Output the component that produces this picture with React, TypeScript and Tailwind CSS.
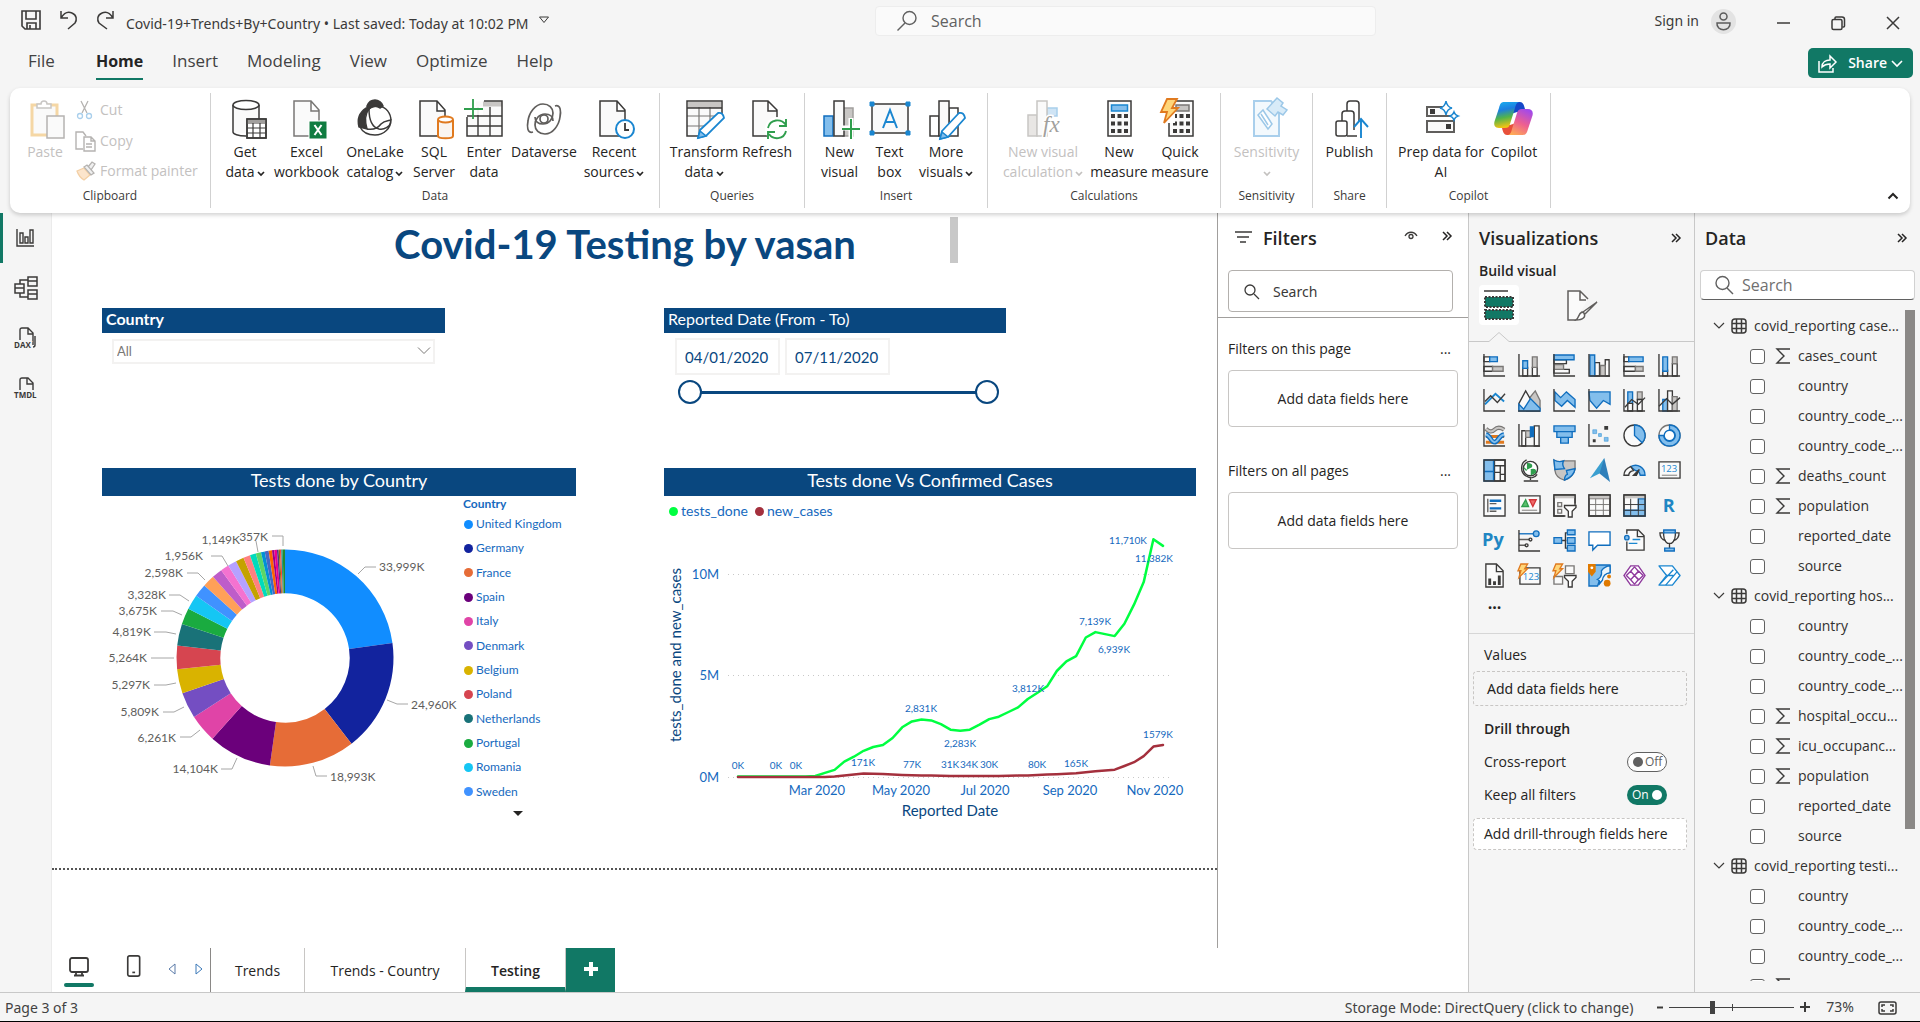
import React from "react";

const INK = "#3b3a39";
const BLUE = "#1a86d0";
const SKY = "#83beec";
const GREY = "#c8c6c4";
const PALE = "#fafafa";

/* ---------- shared pieces ---------- */

type SvgProps = { size?: number; box?: number; children: React.ReactNode; stroke?: string; sw?: number };

function Svg({ size = 24, box, children, stroke = INK, sw = 1.5 }: SvgProps) {
  return (
    <svg
      width={size}
      height={size}
      viewBox={`0 0 ${box ?? size} ${box ?? size}`}
      fill="none"
      stroke={stroke}
      strokeWidth={sw}
      className="shrink-0 overflow-visible"
      aria-hidden="true"
    >
      {children}
    </svg>
  );
}

function Caret({ className = "" }: { className?: string }) {
  return (
    <svg width="8" height="8" viewBox="0 0 8 8" fill="none" stroke="currentColor" strokeWidth="1.7" className={"inline-block " + className} aria-hidden="true">
      <path d="M1 3 4 6 7 3" />
    </svg>
  );
}

function DoubleChevron() {
  return (
    <Svg size={12} sw={1.5} stroke="#252423">
      <path d="M2 2 6 6 2 10M6 2l4 4-4 4" />
    </Svg>
  );
}

/* ---------- ribbon icons, 40 x 40 ---------- */

const Page = ({ x = 5, stroke = INK }: { x?: number; stroke?: string }) => (
  <path d={`M${x} 4h17l8 9v26h-25z M${x + 17} 4v10h8`} stroke={stroke} fill={PALE} />
);

const icons: Record<string, React.ReactNode> = {
  paste: (
    <>
      <rect x="7" y="8" width="25" height="30" stroke="#f5d7a5" strokeWidth="3" fill="#fafafa" />
      <path d="M12 11V7h4a3 3 0 0 1 6 0h4v4z" stroke="#c8c6c4" fill="#fff" />
      <rect x="22" y="19" width="17" height="22" stroke="#b5b3b1" fill="#fafafa" />
    </>
  ),
  getData: (
    <>
      <path d="M8 8c0 6 26 6 26 0v28H8z" fill={PALE} stroke="none" />
      <path d="M8 8v27c0 2 5 4 13 4M34 8v14" />
      <ellipse cx="21" cy="8" rx="13" ry="4.5" fill="#fff" />
      <rect x="22" y="22" width="19" height="19" fill="#fff" />
      <path d="M22 25h19" strokeWidth="4" stroke="#a19f9d" />
      <path d="M22 31h19M22 36h19M28 26v15M35 26v15" strokeWidth="1.2" />
      <rect x="22" y="22" width="19" height="19" />
    </>
  ),
  excel: (
    <>
      <Page x={7} stroke="#797775" />
      <rect x="22" y="24" width="18" height="18" fill="#107c41" stroke="#fff" strokeWidth="1" />
      <path d="m27.500 28 7 10m0-10-7 10" stroke="#fff" strokeWidth="2" />
    </>
  ),
  onelake: (
    <>
      <circle cx="20" cy="23" r="16" fill="#fff" stroke="none" />
      <path d="M12 9C14 4 17 3 20 3s7 2 8 6l-3 2c-4-3-9-2-13 3z" fill={INK} />
      <path d="M11 11C5 15 2 22 4 30l8 2c-2-7-3-14 2-20z" fill={INK} />
      <path d="M14 12c0 9 2 18 10 20 5 1 11-2 12-8 0-8-5-14-12-15-4 0-8 1-10 3M5 30c3 6 9 8 15 8 9 0 16-7 16-15-4 1-7 1-10 4-3 4-8 6-14 5" />
    </>
  ),
  sql: (
    <>
      <Page x={6} />
      <path d="M24 23v16c0 3 15 3 15 0V23" fill="#faf5f0" stroke="#e07a1f" strokeWidth="2" />
      <ellipse cx="31.500" cy="22.500" rx="7.500" ry="3" fill="#fff" stroke="#e07a1f" strokeWidth="2" />
    </>
  ),
  enter: (
    <>
      <rect x="3" y="4" width="35" height="35" fill={PALE} stroke="none" />
      <path d="M12 7h26" strokeWidth="5" stroke={GREY} />
      <path d="M3 19h35M3 29h35M14 10v29M26 10v29" strokeWidth="1.400" />
      <path d="M20 4h18v35H3V20" />
      <path d="M-1 1h20v17H-1z" fill="#fff" stroke="none" opacity="0.900" />
      <path d="M9 2v20M0 12h19" stroke="#2f9e4d" strokeWidth="1.800" />
    </>
  ),
  dataverse: (
    <g stroke="#605e5c" strokeWidth="1.700">
      <path d="M31 9c6-2 6 6 5 11-1 8-7 17-15 17-6 0-10-4-10-9 0-6 4-11 10-11 5 0 8 3 8 7" />
      <path d="M9 35c-6 2-6-6-5-11C5 16 11 7 19 7c6 0 10 4 10 9 0 6-4 11-10 11-5 0-8-3-8-7" />
      <circle cx="20" cy="22" r="4" />
    </g>
  ),
  recent: (
    <>
      <Page x={6} />
      <circle cx="31" cy="32" r="9" fill="#fff" stroke={BLUE} strokeWidth="2" />
      <path d="M31 26v7h4" strokeWidth="1.800" />
    </>
  ),
  transform: (
    <>
      <rect x="3" y="4" width="35" height="35" fill={PALE} stroke="none" />
      <path d="M4 8h33" strokeWidth="6" stroke={GREY} />
      <path d="M3 19h28M3 29h20M15 10v29M26 10v16" strokeWidth="1.200" stroke="#797775" />
      <path d="M20 42 40 20v22z" fill="#fff" stroke="none" />
      <path d="M38 18V4H3v35h12M3 11h35" />
      <path d="m16 33 18-17q5-1 6 5L22 39l-8 2z" fill="#fff" stroke={BLUE} strokeWidth="1.800" />
      <path d="m16 34 6 5-8 2z" fill={SKY} stroke={BLUE} />
    </>
  ),
  refresh: (
    <>
      <path d="M6 4h15l9 9v26H6z M21 4v10h9" fill={PALE} />
      <circle cx="30" cy="32" r="12" fill="#fff" stroke="none" />
      <path d="M21 31c2-9 13-10 18-3M39 22v7h-7M39 34c-2 9-13 9-17 3M21 42v-7h7" stroke="#2f9e4d" strokeWidth="1.900" />
    </>
  ),
  newVisual: (
    <>
      <rect x="23" y="11" width="10" height="28" fill={GREY} stroke="#a19f9d" />
      <rect x="4" y="19" width="9" height="20" fill={SKY} stroke="#106ebe" />
      <rect x="14" y="4" width="10" height="35" fill={PALE} />
      <path d="M31 21v20M22 31h17" stroke="#fff" strokeWidth="5" />
      <path d="M31 22v20M22 32h18" stroke="#2f9e4d" strokeWidth="2" />
    </>
  ),
  textBox: (
    <>
      <rect x="2" y="7" width="36" height="29" fill={PALE} />
      <path d="M0 5h4v4H0zM36 5h4v4h-4zM0 34h4v4H0zM36 34h4v4h-4z" fill={BLUE} stroke={BLUE} strokeWidth="1" />
      <path d="m13 31 7-18 7 18M15 25h10" stroke={BLUE} strokeWidth="2" />
    </>
  ),
  moreVisuals: (
    <>
      <path d="M4 19h9v20H4zM23 11h9v28h-9z" fill="#fff" />
      <rect x="13" y="4" width="10" height="35" fill={PALE} />
      <path d="m16 34 17-18q5-1 6 5L22 40l-8 2z" fill="#fff" stroke={BLUE} strokeWidth="1.800" />
      <path d="m16 35 6 5-8 2z" fill={SKY} stroke={BLUE} />
    </>
  ),
  visualCalc: (
    <>
      <path d="M5 18h9v21H5z" fill="#e8e6e4" stroke="#c8c6c4" />
      <path d="M24 11h10v8H24z" fill="#cfe4f5" stroke="#a9cfec" />
      <path d="M14 4h10v35H14z" fill="#fafafa" stroke="#c8c6c4" />
      <text x="20" y="35" fontSize="23" fontStyle="italic" fontFamily="Liberation Serif, serif" fill="#a19f9d" stroke="#fff" strokeWidth="3" paintOrder="stroke">fx</text>
    </>
  ),
  measure: (
    <>
      <rect x="9" y="4" width="23" height="35" fill={PALE} />
      <rect x="12.500" y="8" width="16" height="6" fill={SKY} stroke={BLUE} />
      <path d="M12 19h17M12 26.500h17M12 34h17" strokeWidth="4" strokeDasharray="4 2.500" />
    </>
  ),
  quick: (
    <>
      <rect x="9" y="4" width="24" height="35" fill={PALE} />
      <rect x="16" y="8" width="13" height="6" fill={GREY} stroke="#797775" />
      <path d="M13 19h17M13 26.500h17M13 34h17" strokeWidth="4" strokeDasharray="4 2.500" />
      <path d="M-1 0h16v26H-1z" fill="#fff" stroke="none" />
      <path d="M7 2h10l-5 9h6L4 26l3-11H1z" fill="#ffd679" stroke="#e07a1f" strokeWidth="1.800" />
    </>
  ),
  sensitivity: (
    <>
      <path d="M7 4h17l8 9v26H7z" fill="#f3f9fd" stroke="#a9cfec" strokeWidth="2" />
      <path d="M11 18l5-5 9 14-4 5zM14 17l7 11" fill="#fff" stroke="#9cc8e8" />
      <path d="M20 12 30 1l6 5-2 3 6 4-4 5-5-3-3 4z" fill="#d8ebf8" stroke="#9cc8e8" />
    </>
  ),
  publish: (
    <>
      <path d="M17 14V7q0-3 3-3h6q3 0 3 3v17M12 24v-7q0-3 3-3h6q3 0 3 3v16" />
      <rect x="6" y="24" width="11" height="15" rx="2" />
      <path d="M17 39h10" />
      <path d="M31 41V22M24 30l7-8 7 8" stroke="#1a86d0" strokeWidth="1.900" />
    </>
  ),
  prep: (
    <>
      <path d="M23 10H6v9h27v-1M6 24h27v11H6z" fill="#fafafa" stroke="#605e5c" strokeWidth="2" />
      <path d="M9 12h5v5H9zM25 27h5v5h-5z" fill={INK} stroke="none" />
      <path d="M25 4q1 6 6 7-5 1-6 7-1-6-6-7 5-1 6-7zM33 15q1 3 4 4-3 1-4 4-1-3-4-4 3-1 4-4z" fill="#fff" stroke={BLUE} />
    </>
  ),
  copilot: (
    <>
      <defs>
        <linearGradient id="cpA" x1="0" y1="0" x2="0.200" y2="1">
          <stop offset="0" stopColor="#1ab2f0" />
          <stop offset="0.350" stopColor="#1c7fe0" />
          <stop offset="0.650" stopColor="#52b44a" />
          <stop offset="1" stopColor="#f0c414" />
        </linearGradient>
        <linearGradient id="cpB" x1="0.700" y1="0" x2="0.200" y2="1">
          <stop offset="0" stopColor="#a44ae8" />
          <stop offset="0.500" stopColor="#ee5f90" />
          <stop offset="1" stopColor="#ffae52" />
        </linearGradient>
      </defs>
      <path d="M22 5h4c3 0 4 3 5 7l1 3h-9l-6 2 2-8c1-3 2-4 3-4z" fill="#1548c8" stroke="none" />
      <path d="M16 38h-3c-3 0-4-3-5-7l-1-3h9l6-2-2 8c-1 3-2 4-4 4z" fill="#e8503a" stroke="none" />
      <path d="M10 5h16c-3 0-4 2-5 6l-5 16c-1 3-2 4-5 4H5c-4 0-6-3-4-8L5 11c1-4 2-6 5-6z" fill="url(#cpA)" stroke="none" />
      <path d="M29 38H13c3 0 4-2 5-6l5-16c1-3 2-4 5-4h6c4 0 6 3 4 8l-4 12c-1 4-2 6-5 6z" fill="url(#cpB)" stroke="none" />
    </>
  ),
};

function RibbonButton({ icon, w, l1, l2, caret, disabled }: { icon: string; w: string; l1: string; l2?: string; caret?: boolean; disabled?: boolean }) {
  return (
    <button type="button" disabled={disabled} className={`${w} flex shrink-0 flex-col items-center whitespace-nowrap text-sm leading-5 ${disabled ? "text-[#c3c1bf]" : "text-[#252423]"}`}>
      <span className="mb-[5px]">
        <Svg size={40}>{icons[icon]}</Svg>
      </span>
      <span>{l1}</span>
      <span>
        {l2}
        {caret && <Caret className={l2 ? "ml-[2px]" : ""} />}
      </span>
    </button>
  );
}

function Group({ name, w, pad, children }: { name: string; w: string; pad: string; children: React.ReactNode }) {
  return (
    <section aria-label={name} className={`${w} my-[5px] flex shrink-0 flex-col border-r border-[#d1d1d1]`}>
      <div className={`flex h-[93px] ${pad}`}>{children}</div>
      <h3 className="text-center text-xs leading-5 text-[#3b3a39]">{name}</h3>
    </section>
  );
}

function Ribbon() {
  return (
    <div className="relative z-10 mx-[10px] flex h-[125px] shrink-0 rounded-[10px] bg-white shadow-[0_2px_4px_rgba(0,0,0,0.180)]">
      <Group name="Clipboard" w="w-[201px]" pad="pl-1 pt-1">
        <RibbonButton icon="paste" w="w-[62px]" l1="Paste" disabled />
        <div className="-mt-[2px] flex flex-col gap-px text-sm text-[#c3c1bf]">
          <button type="button" disabled className="flex h-8 items-center gap-[6px]">
            <Svg size={18} stroke="#b5b3b1" sw={1.3}>
              <path d="M5 0l6 12M12 0 6 12" />
              <circle cx="4" cy="15" r="2.500" stroke="#a9cfec" />
              <circle cx="13" cy="15" r="2.500" stroke="#a9cfec" />
            </Svg>
            Cut
          </button>
          <button type="button" disabled className="flex h-8 items-center gap-[6px]">
            <Svg size={18} stroke="#b5b3b1" sw={1.4}>
              <path d="M7 17H0V0h7l3 4" />
              <path d="M8 5h7l4 4v10H8zM15 5v4h4M10 12h6M10 15h6" fill="#fff" />
            </Svg>
            Copy
          </button>
          <button type="button" disabled className="flex h-8 items-center gap-[6px]">
            <Svg size={18} stroke="#b5b3b1" sw={1.3}>
              <path d="M1 9l7-3 6 7-6 5q-5-3-7-9z" fill="#fce5cc" stroke="#f3cfa4" />
              <path d="M8 5l3-2 7 8-3 2zM12 5l4-5 3 2-4 6" fill="#f0f0f0" />
            </Svg>
            Format painter
          </button>
        </div>
      </Group>
      <Group name="Data" w="w-[449px]" pad="pl-[6px] pt-1">
        <RibbonButton icon="getData" w="w-[56px]" l1="Get" l2="data" caret />
        <RibbonButton icon="excel" w="w-[67px]" l1="Excel" l2="workbook" />
        <RibbonButton icon="onelake" w="w-[70px]" l1="OneLake" l2="catalog" caret />
        <RibbonButton icon="sql" w="w-[48px]" l1="SQL" l2="Server" />
        <RibbonButton icon="enter" w="w-[52px]" l1="Enter" l2="data" />
        <RibbonButton icon="dataverse" w="w-[68px]" l1="Dataverse" />
        <RibbonButton icon="recent" w="w-[72px]" l1="Recent" l2="sources" caret />
      </Group>
      <Group name="Queries" w="w-[145px]" pad="pl-[11px] pt-1">
        <RibbonButton icon="transform" w="w-[66px]" l1="Transform" l2="data" caret />
        <RibbonButton icon="refresh" w="w-[60px]" l1="Refresh" />
      </Group>
      <Group name="Insert" w="w-[183px]" pad="pl-[9px] pt-1">
        <RibbonButton icon="newVisual" w="w-[51px]" l1="New" l2="visual" />
        <RibbonButton icon="textBox" w="w-[49px]" l1="Text" l2="box" />
        <RibbonButton icon="moreVisuals" w="w-[64px]" l1="More" l2="visuals" caret />
      </Group>
      <Group name="Calculations" w="w-[233px]" pad="pl-[11px] pt-1">
        <RibbonButton icon="visualCalc" w="w-[88px]" l1="New visual" l2="calculation" caret disabled />
        <RibbonButton icon="measure" w="w-[64px]" l1="New" l2="measure" />
        <RibbonButton icon="quick" w="w-[58px]" l1="Quick" l2="measure" />
      </Group>
      <Group name="Sensitivity" w="w-[92px]" pad="justify-center pt-1">
        <RibbonButton icon="sensitivity" w="w-[80px]" l1="Sensitivity" l2="" caret disabled />
      </Group>
      <Group name="Share" w="w-[74px]" pad="justify-center pt-1">
        <RibbonButton icon="publish" w="w-[60px]" l1="Publish" />
      </Group>
      <Group name="Copilot" w="w-[164px]" pad="pl-[7px] pt-1">
        <RibbonButton icon="prep" w="w-[94px]" l1="Prep data for" l2="AI" />
        <RibbonButton icon="copilot" w="w-[52px]" l1="Copilot" />
      </Group>
      <button type="button" aria-label="Collapse ribbon" className="mr-[10px] mb-[10px] ml-auto self-end p-[1px]">
        <Svg size={12} sw={2} stroke="#252423">
          <path d="M1.500 8.500 6 4l4.500 4.500" />
        </Svg>
      </button>
    </div>
  );
}

/* ---------- top bars ---------- */

function TitleBar() {
  return (
    <header className="flex h-10 shrink-0 items-center text-sm text-[#3b3a39]">
      <div className="flex w-[875px] shrink-0 items-center pl-[21px]">
        <button type="button" aria-label="Save" className="mr-[18px]">
          <Svg size={20} sw={1.6}>
            <path d="M1 1h18v18H4l-3-3zM5 1v8h10V1M6 19v-6h9v6M9 15v4" />
          </Svg>
        </button>
        <button type="button" aria-label="Undo" className="mr-[17px]">
          <Svg size={20} sw={1.5}>
            <path d="M2 1v7h7M2 8c3-5 7-7 11-5 5 2 5 7 3 10l-7 6" />
          </Svg>
        </button>
        <button type="button" aria-label="Redo" className="mr-[10px]">
          <Svg size={20} sw={1.5}>
            <path d="M17 1v7h-7M17 8c-3-5-7-7-11-5-5 2-5 7-3 10l8 6" />
          </Svg>
        </button>
        <button type="button" className="mt-2 flex items-center gap-[10px] font-['Noto_Sans',sans-serif] whitespace-nowrap">
          Covid-19+Trends+By+Country • Last saved: Today at 10:02 PM
          <svg width="10" height="8" viewBox="0 0 10 8" fill="none" stroke="#3b3a39" className="mb-2" aria-hidden="true">
            <path d="M.5 1h9L5 6.500z" />
          </svg>
        </button>
      </div>
      <label className="mt-[2px] flex h-[30px] w-[501px] items-center gap-[14px] rounded border border-[#ededed] bg-[#fafafa] pl-[21px]">
        <Svg size={20} sw={1.4} stroke="#616161">
          <circle cx="12.500" cy="7" r="6.500" />
          <path d="M8 12 .5 19.500" />
        </Svg>
        <input type="text" aria-label="Search" placeholder="Search" className="w-full bg-transparent text-base outline-none placeholder:text-[#616161]" />
      </label>
      <div className="mr-5 ml-auto flex items-center">
        <button type="button" className="mt-[2px] flex items-center gap-3 font-['Noto_Sans',sans-serif]">
          Sign in
          <span className="flex size-[25px] items-center justify-center rounded-full bg-[#e3e3e3]">
            <Svg size={19} sw={1.5} stroke="#5c5c5c">
              <circle cx="9.500" cy="4.500" r="3.500" />
              <path d="M3 11h13c1 9-14 9-13 0z" />
            </Svg>
          </span>
        </button>
        <button type="button" aria-label="Minimize" className="mt-[5px] ml-10">
          <Svg size={14}>
            <path d="M1 7h13" />
          </Svg>
        </button>
        <button type="button" aria-label="Restore" className="mt-[5px] ml-[41px]">
          <Svg size={14}>
            <rect x="1" y="3.500" width="10" height="10" rx="1.500" />
            <path d="M4 3V2q0-1 1-1h6q2.500 0 2.500 2.500V10q0 1-1 1h-1" />
          </Svg>
        </button>
        <button type="button" aria-label="Close" className="mt-[5px] ml-[41px]">
          <Svg size={14}>
            <path d="m1 1 12 12M13 1 1 13" />
          </Svg>
        </button>
      </div>
    </header>
  );
}

function MenuBar() {
  const items = ["File", "Home", "Insert", "Modeling", "View", "Optimize", "Help"];
  return (
    <nav aria-label="Ribbon tabs" className="flex h-12 shrink-0 items-start pt-2 pr-[7px] pl-7">
      <div className="flex gap-[29px] text-[17px] leading-[26px] text-[#424242]">
        {items.map((t) => (
          <button
            key={t}
            type="button"
            className={t === "Home" ? "flex h-8 items-start border-b-2 border-[#117865] text-base leading-[26px] font-bold text-[#242424]" : t === "File" ? "mr-3 flex h-8 items-start" : "flex h-8 items-start"}
          >
            {t}
          </button>
        ))}
      </div>
      <button type="button" className="ml-auto flex h-[30px] items-center rounded-[5px] bg-[#117865] px-[10px] text-sm text-white">
        <Svg size={19} stroke="#fff" sw={1.5}>
          <path d="M1 7v11h14v-4M4 13c0-5 4-7 8-7V2l6 6-6 6v-4c-4 0-6 1-8 3z" />
        </Svg>
        <span className="mr-1 ml-[11px] font-semibold">Share</span>
        <Svg size={12} stroke="#fff" sw={1.6}>
          <path d="m1 4 5 5 5-5" />
        </Svg>
      </button>
    </nav>
  );
}

function LeftRail() {
  return (
    <nav aria-label="Views" className="flex w-[52px] shrink-0 flex-col border-r border-[#ebebeb]">
      <button type="button" aria-label="Report view" className="flex h-[50px] w-full items-center justify-center border-l-[3px] border-[#117865] pr-[5px]">
        <Svg size={18} sw={1.4}>
          <path d="M1 0v17h17M4 4h3v10H4zM9 8h3v6H9zM14 1h3v13h-3z" />
        </Svg>
      </button>
      <button type="button" aria-label="Table view" className="flex h-[50px] w-full items-center justify-center">
        <Svg size={24} sw={1.5}>
          <path d="M1 8h9v9H1zM1 12h9M14 1h9v9h-9zM14 5h9M14 14h9v9h-9zM14 18h9M6 8V4h8M6 17v4h8" />
        </Svg>
      </button>
      <button type="button" aria-label="DAX query view" className="flex h-[50px] w-full items-center justify-center">
        <Svg size={22} sw={1.4}>
          <path d="M5 13V3q0-2 2-2h6l5 5v12M13 1v6h5M20 9v9q0 2-2 2" />
          <text x="-1" y="21" fontSize="8" fontWeight="700" fontFamily="Open Sans, sans-serif" fill={INK} stroke="#f5f5f5" strokeWidth="2" paintOrder="stroke">DAX</text>
        </Svg>
      </button>
      <button type="button" aria-label="TMDL view" className="flex h-[50px] w-full items-center justify-center">
        <Svg size={22} sw={1.4}>
          <path d="M5 13V3q0-2 2-2h6l5 5v7M12 1v6h6" />
          <text x="-1" y="21" fontSize="8" fontWeight="700" fontFamily="Open Sans, sans-serif" fill={INK} stroke="#f5f5f5" strokeWidth="2" paintOrder="stroke">TMDL</text>
        </Svg>
      </button>
    </nav>
  );
}

/* ---------- report canvas ---------- */

const slices: [number, string][] = [
  [82, "#118dff"], [142.2, "#12239e"], [188, "#e66c37"], [222, "#6b007b"], [237, "#e044a7"], [251, "#744ec2"],
  [264, "#d9b300"], [276.6, "#d64550"], [288.2, "#197278"], [297, "#1aab40"], [305, "#15c6f4"], [312, "#4092ff"],
  [318.4, "#ffa058"], [324, "#be5dc9"], [328.5, "#f472d0"], [333.2, "#b5a1ff"], [337.5, "#c4a200"], [341.2, "#ff8080"],
  [344.4, "#00dbbc"], [347.2, "#5bd667"], [349.2, "#0091d5"], [351.3, "#4668c5"], [353.1, "#ff6300"], [354.3, "#99008a"],
  [355.7, "#ec008c"], [356.6, "#533285"], [357.3, "#99700a"], [358, "#ff4141"], [358.8, "#1f9a85"], [360, "#25892c"],
];

function arc(a0: number, a1: number) {
  const p = (r: number, a: number) => {
    const t = (a * Math.PI) / 180;
    return `${(183 + r * Math.sin(t)).toFixed(2)} ${(162 - r * Math.cos(t)).toFixed(2)}`;
  };
  return `M${p(108.5, a0)}A108.5 108.5 0 0 1 ${p(108.5, a1)}L${p(64.7, a1)}A64.7 64.7 0 0 0 ${p(64.7, a0)}Z`;
}

const donutLabels: [string, number, number, "start" | "end"][] = [
  ["33,999K", 277, 71, "start"], ["24,960K", 309, 209, "start"], ["18,993K", 228, 281, "start"], ["14,104K", 116, 273, "end"],
  ["6,261K", 74, 242, "end"], ["5,809K", 57, 216, "end"], ["5,297K", 48, 189, "end"], ["5,264K", 45, 162, "end"],
  ["4,819K", 49, 136, "end"], ["3,675K", 55, 115, "end"], ["3,328K", 64, 99, "end"], ["2,598K", 81, 77, "end"],
  ["1,956K", 101, 60, "end"], ["1,149K", 138, 44, "end"], ["357K", 166, 41, "end"],
];

const leaders =
  "M256 78l7-7h11M285 204l10 4h11M211 270l3 10h11M135 262l-5 11h-11M98 234l-9 7h-11M82 211l-10 5H61M74 187l-10 2H52M72 162H49M74 138l-10-2H52M80 119l-9-4H59M87 105l-9-6H67M103 84l-7-7H85M126 70l-6-10h-11M156 56l-2-11M181 50V40h-11";

const legend: [string, string][] = [
  ["United Kingdom", "bg-[#118dff]"], ["Germany", "bg-[#12239e]"], ["France", "bg-[#e66c37]"], ["Spain", "bg-[#6b007b]"],
  ["Italy", "bg-[#e044a7]"], ["Denmark", "bg-[#744ec2]"], ["Belgium", "bg-[#d9b300]"], ["Poland", "bg-[#d64550]"],
  ["Netherlands", "bg-[#197278]"], ["Portugal", "bg-[#1aab40]"], ["Romania", "bg-[#15c6f4]"], ["Sweden", "bg-[#4092ff]"],
];

const tests = [
  0.03, 0.03, 0.03, 0.03, 0.03, 0.03, 0.03, 0.03, 0.05, 0.2, 0.35, 0.76, 1, 1.29, 1.48, 1.57, 1.92, 2.45, 2.74, 2.831, 2.79, 2.6, 2.33,
  2.283, 2.33, 2.58, 2.85, 2.97, 3.2, 3.43, 3.84, 4.15, 4.47, 5.22, 5.7, 5.95, 6.87, 7.139, 7.04, 6.939, 7.55, 8.5, 9.6, 11.71, 11.382,
];
const cases = [
  0, 0, 0, 0, 0, 0, 0, 0, 0, 0, 0.03, 0.08, 0.13, 0.171, 0.16, 0.15, 0.12, 0.1, 0.09, 0.077, 0.07, 0.06, 0.05, 0.05, 0.055, 0.05, 0.045,
  0.05, 0.06, 0.07, 0.08, 0.1, 0.12, 0.14, 0.16, 0.18, 0.23, 0.28, 0.32, 0.36, 0.54, 0.73, 1.03, 1.5, 1.579,
];
const toPoints = (vs: number[]) => vs.map((v, i) => `${(74 + i * 9.66).toFixed(1)},${(251 - v * 20.3).toFixed(1)}`).join(" ");

const pointLabels: [string, number, number][] = [
  ["0K", 74, 239], ["0K", 112, 239], ["0K", 132, 239], ["171K", 199, 236], ["77K", 248, 238], ["31K", 286, 238], ["34K", 305, 238],
  ["30K", 325, 238], ["80K", 373, 238], ["165K", 412, 237], ["1579K", 494, 208], ["2,831K", 257, 182], ["2,283K", 296, 217],
  ["3,812K", 364, 162], ["7,139K", 431, 95], ["6,939K", 450, 123], ["11,710K", 464, 14], ["11,382K", 490, 32],
];

function VisualHeader({ children, left }: { children: React.ReactNode; left?: boolean }) {
  return (
    <h2 className={`bg-[#09477f] text-white ${left ? "h-[25px] pl-1 text-base leading-[22px]" : "h-7 text-center text-lg leading-[25px]"}`}>{children}</h2>
  );
}

const thumb =
  "pointer-events-none absolute inset-x-0 top-0 h-6 w-full appearance-none bg-transparent [&::-webkit-slider-thumb]:pointer-events-auto [&::-webkit-slider-thumb]:size-6 [&::-webkit-slider-thumb]:appearance-none [&::-webkit-slider-thumb]:rounded-full [&::-webkit-slider-thumb]:border-2 [&::-webkit-slider-thumb]:border-[#09477f] [&::-webkit-slider-thumb]:bg-white";

function Canvas() {
  return (
    <main className="min-w-0 flex-1 bg-white font-['Lato',sans-serif] text-[#09477f]">
      <div className="flex h-[657px] flex-col border-b-2 border-dotted border-[#555]">
        <div className="mt-1 ml-[248px] flex h-[46px] w-[658px]">
          <h1 className="flex-1 text-center text-[40px] leading-[54px] font-bold whitespace-nowrap">Covid-19 Testing by vasan</h1>
          <div className="w-2 bg-[#c8c8c8]" />
        </div>

        <div className="mt-[45px] flex h-[160px] gap-[219px] pl-[50px]">
          <section className="w-[343px]">
            <VisualHeader left>
              <label htmlFor="country" className="font-bold">Country</label>
            </VisualHeader>
            <div className="relative mt-[5px] ml-[10px] w-[323px]">
              <select id="country" className="h-[25px] w-full appearance-none border-2 border-[#f3f2f1] bg-white pl-[3px] text-[13px] text-[#7a7876]">
                <option>All</option>
              </select>
              <svg width="14" height="8" viewBox="0 0 14 8" fill="none" stroke="#7a7876" className="pointer-events-none absolute top-[9px] right-1" aria-hidden="true">
                <path d="m1 .5 6 6 6-6" />
              </svg>
            </div>
          </section>
          <section className="w-[342px]">
            <VisualHeader left>Reported Date (From - To)</VisualHeader>
            <div className="mt-[5px] ml-[11px] flex gap-[5px]">
              <input type="text" aria-label="From date" defaultValue="04/01/2020" className="h-[37px] w-[105px] border-2 border-[#f3f2f1] pl-[8px] text-[15px]" />
              <input type="text" aria-label="To date" defaultValue="07/11/2020" className="h-[37px] w-[105px] border-2 border-[#f3f2f1] pl-[8px] text-[15px]" />
            </div>
            <div className="relative mt-[5px] ml-[14px] flex h-6 w-[321px] items-center">
              <div className="mx-3 h-[3px] flex-1 bg-[#09477f]" />
              <input type="range" aria-label="Range start" defaultValue={0} className={thumb} />
              <input type="range" aria-label="Range end" defaultValue={100} className={thumb} />
            </div>
          </section>
        </div>

        <div className="flex gap-[88px] pl-[50px]">
          <section className="w-[474px]">
            <VisualHeader>Tests done by Country</VisualHeader>
            <div className="flex">
              <svg width="361" height="320" viewBox="0 0 361 320" className="shrink-0 overflow-visible" role="img" aria-label="Tests done by country">
                {slices.map(([end, fill], i) => (
                  <path key={i} d={arc(i ? slices[i - 1][0] : 0, end)} fill={fill} />
                ))}
                <path d={leaders} fill="none" stroke="#a6a6a6" />
                <g fontSize="12" fill="#605e5c">
                  {donutLabels.map(([t, x, y, anchor]) => (
                    <text key={t} x={x} y={y + 4} textAnchor={anchor}>{t}</text>
                  ))}
                </g>
              </svg>
              <div className="w-[110px] text-xs whitespace-nowrap text-[#1569be]">
                <h3 className="h-4 font-bold leading-4">Country</h3>
                <ul className="grid h-[292px] grid-rows-12">
                  {legend.map(([name, bg]) => (
                    <li key={name} className="flex items-center gap-[3px] pl-px">
                      <span className={`${bg} size-[9px] rounded-full`} />
                      {name}
                    </li>
                  ))}
                </ul>
                <button type="button" aria-label="More legend entries" className="mx-auto mt-[7px] block border-x-[5px] border-t-[5px] border-x-transparent border-t-[#252423]" />
              </div>
            </div>
          </section>

          <section className="w-[532px]">
            <VisualHeader>Tests done Vs Confirmed Cases</VisualHeader>
            <div className="flex h-[30px] items-center gap-[7px] pl-[5px] text-sm text-[#1569be]">
              <span className="flex items-center gap-[3px]"><span className="size-[9px] rounded-full bg-[#00ff41]" />tests_done</span>
              <span className="flex items-center gap-[3px]"><span className="size-[9px] rounded-full bg-[#a4303d]" />new_cases</span>
            </div>
            <svg width="532" height="294" viewBox="0 0 532 294" className="overflow-visible" role="img" aria-label="Tests done versus confirmed cases">
              <path d="M64 48.500H508M64 149.500H508M64 251.500H508" stroke="#c8c8c8" strokeDasharray="1 4" />
              <polyline points={toPoints(tests)} fill="none" stroke="#00ff41" strokeWidth="2.500" strokeLinejoin="round" strokeLinecap="round" />
              <polyline points={toPoints(cases)} fill="none" stroke="#a4303d" strokeWidth="2.500" strokeLinejoin="round" strokeLinecap="round" />
              <g fontSize="10" fill="#1569be" textAnchor="middle">
                {pointLabels.map(([t, x, y], i) => (
                  <text key={i} x={x} y={y + 4}>{t}</text>
                ))}
              </g>
              <g fontSize="13" fill="#1569be">
                <text x="55" y="53" textAnchor="end">10M</text>
                <text x="55" y="154" textAnchor="end">5M</text>
                <text x="55" y="256" textAnchor="end">0M</text>
                <text x="153" y="269" textAnchor="middle">Mar 2020</text>
                <text x="237" y="269" textAnchor="middle">May 2020</text>
                <text x="321" y="269" textAnchor="middle">Jul 2020</text>
                <text x="406" y="269" textAnchor="middle">Sep 2020</text>
                <text x="491" y="269" textAnchor="middle">Nov 2020</text>
              </g>
              <g fontSize="15" fill="#09477f" textAnchor="middle">
                <text x="286" y="290">Reported Date</text>
                <text transform="translate(17 129) rotate(-90)">tests_done and new_cases</text>
              </g>
            </svg>
          </section>
        </div>
      </div>
    </main>
  );
}

/* ---------- filters pane ---------- */

function FilterSection({ title, first }: { title: string; first?: boolean }) {
  return (
    <section className={first ? "mt-[21px]" : "mt-[34px]"}>
      <div className="flex h-5 items-center justify-between pr-[17px] pl-[10px]">
        <h3>{title}</h3>
        <button type="button" aria-label={`More options for ${title}`}>...</button>
      </div>
      <div className="mx-[10px] mt-[11px] flex h-[57px] items-center justify-center rounded-sm border border-[#c8c6c4]">Add data fields here</div>
    </section>
  );
}

function FiltersPane() {
  return (
    <aside aria-label="Filters" className="w-[251px] shrink-0 border-l border-[#a19f9d] bg-white text-sm text-[#252423]">
      <div className="mb-[7px] flex h-[50px] items-center pr-[15px] pl-[17px]">
        <Svg size={17} sw={1.6}>
          <path d="M0 2h17M2 7h12M5 12h6" />
        </Svg>
        <h2 className="ml-[11px] text-lg font-semibold">Filters</h2>
        <button type="button" aria-label="Show filters" className="mr-6 mb-1 ml-auto">
          <Svg size={12} sw={1.3}>
            <path d="M0 6c3-5 9-5 12 0" />
            <circle cx="6" cy="6.500" r="2" />
          </Svg>
        </button>
        <button type="button" aria-label="Collapse filters" className="mb-1">
          <DoubleChevron />
        </button>
      </div>
      <div className="border-b border-[#a19f9d] pr-[15px] pb-[5px] pl-[10px]">
        <label className="flex h-[42px] items-center gap-[14px] rounded-sm border border-[#b3b0ad] pl-[15px]">
          <Svg size={15} sw={1.3}>
            <circle cx="6" cy="6" r="5" />
            <path d="m10 10 5 5" />
          </Svg>
          <input type="text" aria-label="Search filters" placeholder="Search" className="w-full pt-[2px] font-['Noto_Sans',sans-serif] outline-none placeholder:text-[#3b3a39]" />
        </label>
      </div>
      <FilterSection first title="Filters on this page" />
      <FilterSection title="Filters on all pages" />
    </aside>
  );
}

/* ---------- visualizations pane, 24 x 24 icons ---------- */

const Axes = () => <path d="M1 0v23h22" />;
const b = { fill: SKY, stroke: "#106ebe" };
const g = { fill: GREY, stroke: "#797775" };
const w = { fill: PALE, stroke: INK };

const viz: [string, React.ReactNode][] = [
  ["Stacked bar chart", <><path {...w} d="M1 3h6v5H1zM1 13h9v5H1z" /><path {...b} d="M7 3h8v5H7z" /><path {...g} d="M10 13h11v5H10z" /><Axes /></>],
  ["Stacked column chart", <><path {...w} d="M5 14h5v9H5zM15 14h5v9h-5z" /><path {...b} d="M5 7h5v8H5z" /><path {...g} d="M15 3h5v11h-5z" /><Axes /></>],
  ["Clustered bar chart", <><path {...w} d="M1 6h13v4H1zM1 16h16v4H1z" /><path {...b} d="M1 1h21v5H1z" /><path {...g} d="M1 11h10v5H1z" /><Axes /></>],
  ["Clustered column chart", <><path {...w} d="M7 9h5v14H7zM18 6h4v17h-4z" /><path {...b} d="M2 1h5v22H2z" /><path {...g} d="M13 12h5v11h-5z" /><Axes /></>],
  ["100% stacked bar chart", <><path {...w} d="M1 3h5v5H1zM1 13h12v5H1z" /><path {...b} d="M6 3h15v5H6z" /><path {...g} d="M13 13h8v5h-8z" /><Axes /></>],
  ["100% stacked column chart", <><path {...w} d="M5 17h5v6H5zM15 10h5v13h-5z" /><path {...b} d="M5 3h5v15H5z" /><path {...g} d="M15 3h5v7h-5z" /><Axes /></>],
  ["Line chart", <><path d="m2 16 11-11 9 8" stroke={BLUE} strokeWidth="2" /><path d="m2 13 6-6 7 7 8-9" /><Axes /></>],
  ["Area chart", <><path {...g} d="m9 13 9-11 5 10v11H9z" /><path {...w} d="m1 15 7-13 7 12-6 8H1z" /><path {...b} d="m1 16 5 5 7-11 10 10v3H1z" /><path d="M0 23h23" /></>],
  ["Stacked area chart", <><path {...b} d="m2 3 6 6 6-6 9 8v8l-8-7-6 6-7-6z" /><Axes /></>],
  ["Ribbon area chart", <><path {...b} d="M1 3h22v13l-7-4-7 8-7-8z" /><Axes /></>],
  ["Line and stacked column chart", <><path {...b} d="M5 3h5v13H5z" /><path {...g} d="M15 3h5v8h-5z" /><path {...w} d="M5 15h5v8H5zM15 11h5v12h-5z" /><Axes /><path d="m2 19 7-8 7 5 7-7" /></>],
  ["Line and clustered column chart", <><path {...b} d="M5 11h5v12H5z" /><path {...w} d="M10 2h5v21h-5z" /><path {...g} d="M15 8h5v15h-5z" /><Axes /><path d="m1 18 8-8 6 6 8-7" /></>],
  ["Ribbon chart", <><path d="M3 13h19M3 19h19" stroke="#e07a1f" strokeWidth="3" /><path d="M3 5q5 5 9 1t10 0" stroke="#797775" strokeWidth="4.500" /><path d="M3 5q5 5 9 1t10 0" stroke={GREY} strokeWidth="2" /><path d="M3 11c5 1 5 8 9 8s4-7 10-8" stroke="#106ebe" strokeWidth="5" /><path d="M3 11c5 1 5 8 9 8s4-7 10-8" stroke={SKY} strokeWidth="2" /><Axes /></>],
  ["Waterfall chart", <><path {...w} d="M4 7h4v16H4zM17 2h5v21h-5z" /><path {...g} d="M8 7h5v7H8z" /><path {...b} d="M13 3h3v10h-3z" fill="#106ebe" /><Axes /></>],
  ["Funnel chart", <><path {...b} d="M1 2h22v6H1zM4 8h16v6H4zM8 14h8v6H8z" /></>],
  ["Scatter chart", <><Axes /><path d="M5 6h4v4H5zM11 10h3v3h-3zM17 14h4v4h-4z" fill={SKY} stroke={BLUE} strokeWidth="0.500" /><path d="M17 2h4v4h-4zM5 16h3v3H5z" fill={INK} stroke="none" /></>],
  ["Pie chart", <><circle cx="12" cy="12" r="11" fill={PALE} /><path {...b} d="M12 1a11 11 0 0 1 8 18.500L12 12z" /></>],
  ["Donut chart", <><circle cx="12" cy="12" r="11" {...g} fill={PALE} /><path {...b} d="M12 1a11 11 0 1 1-11 11h5a6 6 0 1 0 6-6z" /><circle cx="12" cy="12" r="5.500" {...b} fill="#fff" /></>],
  ["Treemap", <><path {...w} d="M12 1h11v22H12zM12 7h11M12 14h6v9M18 7v9h5" /><path {...b} d="M1 1h10v12H1zM1 13h10v10H1z" /><path d="M1 1h22v22H1z" /></>],
  ["Map", <><circle cx="13" cy="10" r="7.500" fill="#fff" /><path d="M10 5q5 0 4 3l-4 2zM14 11q5-1 4 3l-4 2zM6 9l3 3" fill="#2f9e4d" stroke="#2f9e4d" /><path d="M9 1C2 4 2 15 9 18c5 3 9 1 11-2M13 19v3M6 23h15" /></>],
  ["Filled map", <><path {...g} d="M1 1q5 3 10 1l12 0v9q-3 9-11 11Q3 20 2 12z" /><path {...b} d="M1 1q5 3 10 1-2 4 1 8l-10 1zM14 12l9-2q-1 8-11 12 0-5 3-6z" /></>],
  ["Azure map", <><path d="M17-1 2 20l10-5 4-4z" fill="#3a9fd0" stroke="none" /><path d="m17-1 6 25-11-9z" fill="#2f7fba" stroke="none" /></>],
  ["Gauge", <><path {...b} d="M8 8c7-4 15 1 15 9h-5q-1-5-5-5z" /><path {...w} d="M1 17q0-6 7-9l3 4q-5 1-5 5z" /><path d="m11 17 6-6-3 6z" fill={INK} /></>],
  ["Card", <><path {...w} d="M1 3h22v17H1z" /><text x="3" y="14" fontSize="10" fontFamily="Open Sans, sans-serif" fill={BLUE} stroke="none">123</text><path d="M4 17h16" stroke="#a19f9d" /></>],
  ["Multi-row card", <><path {...w} d="M1 1h22v22H1z" /><path d="M7 7h12M7 15h12" stroke="#106ebe" strokeWidth="2.500" /><path d="M5 5v14M7 10h7M7 18h7" stroke="#605e5c" /></>],
  ["KPI", <><path {...w} d="M1 2h22v18H1z" /><path d="m4 13 4-7 3 7z" fill="#5bbf6e" stroke="#2f9e4d" /><path d="m12 6 3.500 7L19 6z" fill="#f06a6a" stroke="#d13438" /><path d="M4 17h16" stroke="#a19f9d" /></>],
  ["Slicer", <><path {...w} d="M1 1h22v22H1z" /><path d="M1 3h22" stroke={GREY} strokeWidth="3" /><path d="M5 9h4v4H5zM5 16h4v4H5z" stroke="#797775" /><path d="M12 24V12h12v12z" fill="#f5f5f5" stroke="none" /><path d="M12 12h12v2l-4 4v6h-4v-6l-4-4z" fill="#fff" /><path d="M23 10V1H1v22h12" /></>],
  ["Table", <><path {...w} d="M1 1h22v22H1z" /><path d="M1 3h22" stroke={GREY} strokeWidth="3" /><path d="M1 11h22M1 17h22M8 5v18M16 5v18M1 5h22" stroke="#797775" strokeWidth="1" /><path d="M1 1h22v22H1z" /></>],
  ["Matrix", <><path {...w} d="M1 1h22v22H1z" /><path {...b} d="M1 17h15V5h7v18H1z" /><path d="M1 3h22" stroke={GREY} strokeWidth="3" /><path d="M1 11h22M1 17h22M8 5v18M16 5v18" strokeWidth="1" /><path d="M1 1h22v22H1z" /></>],
  ["R script visual", <text x="5" y="19" fontSize="19" fontWeight="700" fontFamily="Open Sans, sans-serif" fill="#1f86c3" stroke="none">R</text>],
  ["Python visual", <text x="-1" y="18" fontSize="19" fontWeight="700" fontFamily="Open Sans, sans-serif" fill="#1f86c3" stroke="none">Py</text>],
  ["Key influencers", <><path d="M1 5h16" stroke="#106ebe" /><circle cx="19" cy="5" r="3" {...b} /><path d="M1 11h11M1 17h7" stroke="#605e5c" /><circle cx="13" cy="11" r="1.500" /><circle cx="9" cy="17" r="1.500" /><path d="M1 1v22h22" /></>],
  ["Decomposition tree", <><path d="M8 12h6M17 4h-4v16h4" /><path {...b} d="M1 9h8v6H1zM15 1h8v5h-8zM15 9h8v6h-8zM15 17h8v6h-8z" /></>],
  ["Q&A", <path d="M1 3h22v14H10l-5 5v-5H1z" fill="#fff" stroke="#106ebe" />],
  ["Narrative", <><path {...w} d="M4 1h12l6 6v15H4zM15 1v7h7" /><circle cx="4" cy="9" r="4" fill="#f5f5f5" stroke="none" /><circle cx="4" cy="9" r="2.300" fill={SKY} stroke="#106ebe" /><path d="M10 11h8M6 15h9" stroke={BLUE} /></>],
  ["Goals", <><path {...w} d="M6 2h12q1 10-4 13h-4Q5 12 6 2zM12 15v5" /><path d="M6 4H2q0 7 6 8M18 4h4q0 7-6 8" /><path {...b} d="M6 1h12v3H6zM7 20h10v3H7z" /></>],
  ["Paginated report", <><path {...w} d="M3 0h11l7 7v17H3zM14 0v8h7" /><path d="M7 22v-7M12 22v-4M17 22v-10" strokeWidth="3" /></>],
  ["Card (new)", <><path {...w} d="M2 4h21v17H2z" /><text x="5" y="17" fontSize="10" fontFamily="Open Sans, sans-serif" fill={BLUE} stroke="none">123</text><path d="M3 0h7L7 5h3L1 14l2-7H0z" fill="#ffd679" stroke="#e07a1f" /></>],
  ["Slicer (new)", <><path {...g} fill={PALE} d="M13 2h9v8h-9zM1 13h9v8H1z" /><path d="M3 0h7L7 5h3L1 14l2-7H0z" fill="#ffd679" stroke="#e07a1f" /><path d="M12 12h12v2l-4 4v6h-4v-6l-4-4z" fill="#fff" /></>],
  ["ArcGIS map", <><path {...b} d="M1 1h22v8l-9 2-4 12H1z" /><path d="M14 7q4-5 9-5v7q-7 1-8 8l-4 5q3-4-1-6 5-2 4-9z" fill="#eaf4fb" stroke="#106ebe" /><path d="M0 0h8v8l-4 5-4-5z" fill="#e07a00" stroke="none" /><circle cx="4" cy="4" r="1.500" fill="#fff" stroke="none" /><circle cx="20" cy="20" r="3.500" fill="#e07a00" stroke="none" /><circle cx="22" cy="13" r="2" fill="#e07a00" stroke="none" /></>],
  ["Power Apps", <g stroke="#8f3a9d"><path fill="#fff" d="m8 2 8 0 7 10-7 10H8L1 12z" /><path d="m12 3 4 4.500-4 4.500-4-4.500zM16.500 7.500 21 12l-4.500 4.500L12 12zM12 12l4 4.500-4 4.500-4-4.500zM8 7.500 3.500 12 8 16.500" strokeLinejoin="round" /></g>],
  ["Power Automate", <g stroke={BLUE} strokeLinejoin="round"><path fill="#fff" d="M1 2h14l8 10-8 10H1l8-10z" /><path d="M9 12h7M3 20 16 6M8 22l12-14" /></g>],
];

function Toggle({ label, on }: { label: string; on?: boolean }) {
  const id = label.replace(/ /g, "-");
  return (
    <div className="flex h-[33px] items-center justify-between pr-[27px] pl-[15px]">
      <label htmlFor={id}>{label}</label>
      <span className={`relative flex h-5 w-10 items-center rounded-full text-xs ${on ? "bg-[#117865] pl-[5px] text-white" : "border border-[#616161] bg-white pl-[17px] text-[#616161]"}`}>
        <input id={id} type="checkbox" defaultChecked={on} className="absolute inset-0 size-full cursor-pointer opacity-0" />
        <span aria-hidden="true" className={`absolute size-[10px] rounded-full ${on ? "right-[5px] bg-white" : "left-[5px] bg-[#616161]"}`} />
        {on ? "On" : "Off"}
      </span>
    </div>
  );
}

function VizPane() {
  return (
    <aside aria-label="Visualizations" className="flex w-[226px] shrink-0 flex-col border-l border-[#c8c8c8] text-sm text-[#252423]">
      <div className="flex h-[50px] items-center justify-between pr-3 pl-[10px]">
        <h2 className="text-lg font-semibold">Visualizations</h2>
        <button type="button" aria-label="Collapse visualizations"><DoubleChevron /></button>
      </div>
      <h3 className="h-[22px] pl-[10px] leading-4 font-semibold">Build visual</h3>
      <div className="flex h-[47px] gap-[43px] pl-[10px]">
        <button type="button" aria-label="Build visual" className="flex size-10 items-center justify-center rounded bg-white">
          <Svg size={30}>
            <path d="M0 1h24" />
            <path d="M1 7h28v10H1zM1 20h28v9H1z" fill="#117865" strokeWidth="2" strokeDasharray="2 1.500" />
          </Svg>
        </button>
        <button type="button" aria-label="Format visual" className="flex size-10 items-center justify-center">
          <Svg size={30} stroke="#605e5c">
            <path d="M21 9 13 1H1v29h8M13 1v9h6" fill="#fafafa" />
            <path d="m30 12-12 12-2-2zM17 23c2 4-1 7-8 7 3-2 2-6 6-8z" fill="#fff" />
          </Svg>
        </button>
      </div>
      <svg width="225" height="10" viewBox="0 0 225 10" fill="none" stroke="#c8c8c8" className="shrink-0" aria-hidden="true">
        <path d="M0 9.500h20l10-9 10 9h185" />
      </svg>
      <div className="mt-[6px] grid grid-cols-[repeat(6,35px)] pl-2">
        {viz.map(([name, art]) => (
          <button key={name} type="button" aria-label={name} className="flex h-[35px] items-center justify-center">
            <Svg size={23} box={24} sw={1.4}>{art}</Svg>
          </button>
        ))}
        <button type="button" aria-label="Get more visuals" className="flex h-5 justify-center text-base leading-5 font-bold">...</button>
      </div>
      <div className="mt-[20px] border-t border-[#d6d6d6] pt-[11px]">
        <h3 className="h-[26px] pl-[15px]">Values</h3>
        <div className="mr-[7px] ml-1 flex h-[35px] items-center rounded border border-dashed border-[#c8c6c4] pl-[13px] font-['Noto_Sans',sans-serif]">Add data fields here</div>
        <h3 className="mt-[13px] h-[26px] pl-[15px] font-semibold">Drill through</h3>
        <Toggle label="Cross-report" />
        <Toggle label="Keep all filters" on />
        <div className="mt-[7px] mr-[7px] ml-1 flex h-8 items-center rounded border border-dashed border-[#c8c6c4] bg-white pl-[10px] whitespace-nowrap">Add drill-through fields here</div>
      </div>
    </aside>
  );
}

/* ---------- data pane ---------- */

const tables: { name: string; fields: [string, boolean][] }[] = [
  {
    name: "covid_reporting case...",
    fields: [["cases_count", true], ["country", false], ["country_code_...", false], ["country_code_...", false], ["deaths_count", true], ["population", true], ["reported_date", false], ["source", false]],
  },
  {
    name: "covid_reporting hos...",
    fields: [["country", false], ["country_code_...", false], ["country_code_...", false], ["hospital_occu...", true], ["icu_occupanc...", true], ["population", true], ["reported_date", false], ["source", false]],
  },
  { name: "covid_reporting testi...", fields: [["country", false], ["country_code_...", false], ["country_code_...", false], ["", true]] },
];

function DataPane() {
  return (
    <aside aria-label="Data" className="flex w-[226px] shrink-0 flex-col border-l border-[#c8c8c8] text-sm text-[#252423]">
      <div className="flex h-[57px] shrink-0 items-center justify-between pr-3 pb-[7px] pl-[10px]">
        <h2 className="text-lg font-semibold">Data</h2>
        <button type="button" aria-label="Collapse data"><DoubleChevron /></button>
      </div>
      <label className="mr-[5px] ml-[5px] flex h-[30px] shrink-0 items-center gap-[9px] rounded border border-[#d1d1d1] border-b-[#616161] bg-white pl-[14px]">
        <Svg size={18} sw={1.4} stroke="#616161">
          <circle cx="7.500" cy="7" r="6.500" />
          <path d="m12 12 6 6" />
        </Svg>
        <input type="text" aria-label="Search data" placeholder="Search" className="w-full bg-transparent text-base outline-none placeholder:text-[#707070]" />
      </label>
      <div className="mt-[10px] mr-[5px] mb-[11px] flex min-h-0 flex-1 items-start">
        <ul className="h-full min-w-0 flex-1 overflow-hidden pt-px text-[#323130]">
          {tables.map((t, ti) => (
            <li key={t.name}>
              <div className="flex h-[30px] items-center whitespace-nowrap">
                <button type="button" aria-label={`Collapse ${t.name}`} className="mr-[7px] ml-[19px]">
                  <Svg size={10} sw={1.2}><path d="m0 2 5 5 5-5" /></Svg>
                </button>
                <Svg size={16} sw={1.5}>
                  <rect x="1" y="1" width="14" height="14" rx="3" />
                  <path d="M1 5.500h14M1 10.500h14M5.500 1v14M10.500 1v14" />
                </Svg>
                <span className="ml-[7px]">{t.name}</span>
              </div>
              <ul>
                {t.fields.map(([f, sum], fi) => (
                  <li key={fi}>
                    <label htmlFor={`f-${ti}-${fi}`} className="flex h-[30px] items-center pl-[55px] whitespace-nowrap">
                      <input id={`f-${ti}-${fi}`} type="checkbox" className="size-[15px] shrink-0 appearance-none rounded-[3px] border border-[#616161] bg-white" />
                      <span className="ml-[11px] flex w-[22px]">
                        {sum && (
                          <Svg size={14} sw={1.4}><path d="M14 0H1l7 7-7 7h13" /></Svg>
                        )}
                      </span>
                      {f}
                    </label>
                  </li>
                ))}
              </ul>
            </li>
          ))}
        </ul>
        <div className="h-[519px] w-[10px] shrink-0 bg-[#8a8886]" />
      </div>
    </aside>
  );
}

/* ---------- bottom bars ---------- */

function PageTabs() {
  return (
    <nav aria-label="Report pages" className="flex h-11 shrink-0 bg-white text-sm text-[#252423]">
      <button type="button" aria-label="Desktop layout" className="ml-[12px] flex w-[30px] flex-col items-center justify-between pt-[9px] pb-[5px]">
        <Svg size={20} sw={1.8}>
          <rect x="1" y="1" width="18" height="14" rx="2" />
          <path d="M7 15v3M13 15v3M5 18.500h10" />
        </Svg>
        <span className="h-1 w-full rounded-full bg-[#117865]" />
      </button>
      <button type="button" aria-label="Mobile layout" className="ml-[31px] pb-2">
        <Svg size={22} box={24} sw={1.8}>
          <rect x="3" y="1" width="13" height="22" rx="2" />
          <path d="M8 19h3" />
        </Svg>
      </button>
      <button type="button" aria-label="Previous page" className="ml-5 pb-[2px]">
        <Svg size={10} sw={1}><path d="M8 0v10L2 5z" stroke="#5a7aa8" /></Svg>
      </button>
      <button type="button" aria-label="Next page" className="mr-[6px] ml-[17px] pb-[2px]">
        <Svg size={10} sw={1}><path d="M2 0v10l6-5z" stroke="#3a78b8" /></Svg>
      </button>
      <button type="button" className="w-[94px] border-l border-[#8a8886] pt-[2px]">Trends</button>
      <button type="button" className="w-[161px] border-l border-[#c8c6c4] pt-[2px]">Trends - Country</button>
      <button type="button" className="w-[101px] border-x border-b-[5px] border-x-[#c8c6c4] border-b-[#117865] pt-[6px] font-semibold">Testing</button>
      <button type="button" aria-label="New page" className="flex w-[49px] items-center justify-center bg-[#117865] pb-[2px]">
        <Svg size={14} stroke="#fff" sw={4}><path d="M7 0v14M0 7h14" /></Svg>
      </button>
    </nav>
  );
}

function StatusBar() {
  return (
    <footer className="flex h-[30px] shrink-0 items-center border-t border-b border-t-[#c8c8c8] border-b-black pr-6 pl-[5px] font-['Noto_Sans',sans-serif] text-sm text-[#424242]">
      <span className="pt-[2px]">Page 3 of 3</span>
      <button type="button" className="mr-6 ml-auto pt-[2px]">Storage Mode: DirectQuery (click to change)</button>
      <button type="button" aria-label="Zoom out"><Svg size={7} sw={2}><path d="M0 3.500h6" /></Svg></button>
      <span className="relative ml-[5px] flex h-4 w-[125px] items-center">
        <span className="absolute inset-x-0 h-px bg-[#424242]" />
        <span className="absolute left-1/2 h-[7px] w-px bg-[#424242]" />
        <input
          type="range"
          aria-label="Zoom"
          defaultValue={34}
          className="relative w-full appearance-none bg-transparent [&::-webkit-slider-thumb]:h-[13px] [&::-webkit-slider-thumb]:w-[5px] [&::-webkit-slider-thumb]:appearance-none [&::-webkit-slider-thumb]:bg-[#424242]"
        />
      </span>
      <button type="button" aria-label="Zoom in" className="ml-[6px]"><Svg size={10} sw={2}><path d="M5 0v10M0 5h10" /></Svg></button>
      <span className="mr-[25px] ml-4">73%</span>
      <button type="button" aria-label="Fit to page">
        <Svg size={17} sw={1.5}>
          <rect x="0" y="3" width="17" height="12" rx="2" />
          <path d="M3 8V6h3M11 6h3v2M3 10v2h3M14 10v2h-3" />
        </Svg>
      </button>
    </footer>
  );
}

export default function App() {
  return (
    <div className="flex h-screen flex-col overflow-hidden bg-[#f5f5f5] font-['Open_Sans',sans-serif]">
      <TitleBar />
      <MenuBar />
      <Ribbon />
      <div className="flex min-h-0 flex-1">
        <LeftRail />
        <div className="flex min-w-0 flex-1 flex-col">
          <div className="flex min-h-0 flex-1">
            <Canvas />
            <FiltersPane />
          </div>
          <PageTabs />
        </div>
        <VizPane />
        <DataPane />
      </div>
      <StatusBar />
    </div>
  );
}
